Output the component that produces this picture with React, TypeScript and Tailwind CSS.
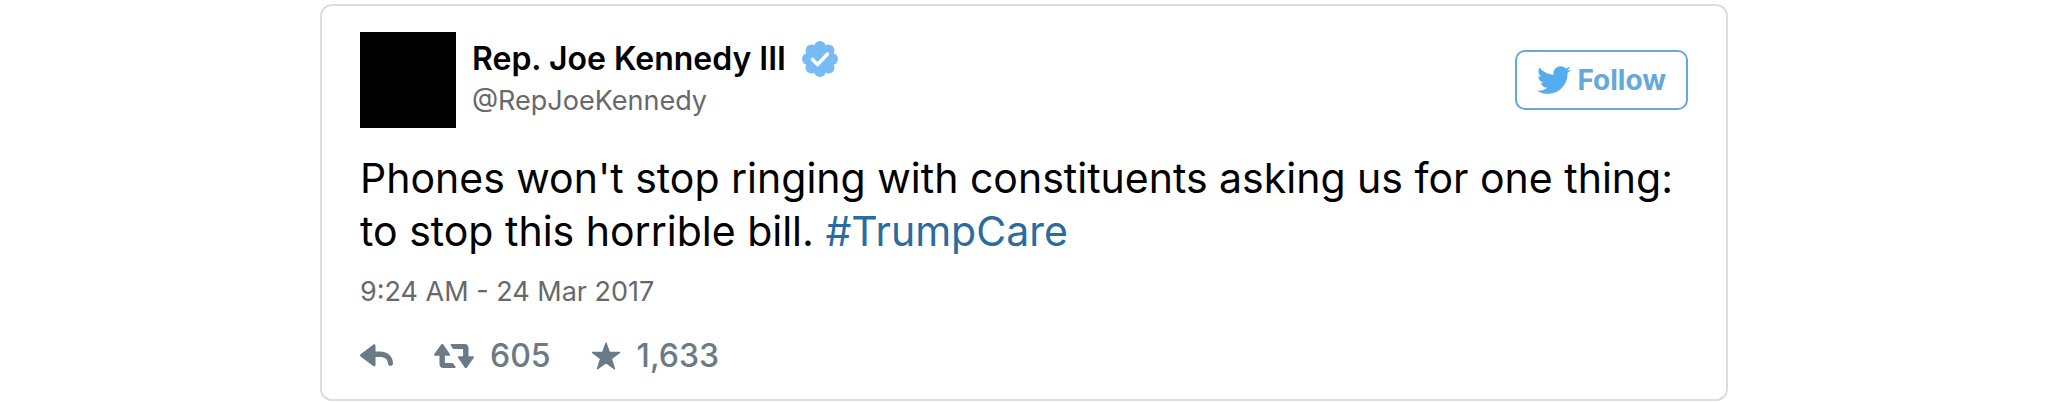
import { FaTwitter } from 'react-icons/fa'

const tweet = {
  name: 'Rep. Joe Kennedy III',
  handle: '@RepJoeKennedy',
  date: '9:24 AM - 24 Mar 2017',
  retweets: '605',
  likes: '1,633',
}

function VerifiedBadge() {
  return (
    <svg viewBox="0 0 36 36" className="size-9" role="img" aria-label="Verified account">
      <g fill="#77bbf4">
        <circle cx="18" cy="18" r="14" />
        <circle cx="18" cy="6" r="6" />
        <circle cx="26.5" cy="9.5" r="6" />
        <circle cx="30" cy="18" r="6" />
        <circle cx="26.5" cy="26.5" r="6" />
        <circle cx="18" cy="30" r="6" />
        <circle cx="9.5" cy="26.5" r="6" />
        <circle cx="6" cy="18" r="6" />
        <circle cx="9.5" cy="9.5" r="6" />
      </g>
      <path d="M10.5 18.5l5 5L25.5 13" fill="none" stroke="#fff" strokeWidth="3.6" strokeLinecap="round" strokeLinejoin="round" />
    </svg>
  )
}

function ReplyIcon() {
  return (
    <svg viewBox="0 0 34 24" className="h-6 w-[34px]" fill="currentColor" aria-hidden="true">
      <path d="M.6 10.200 13.200.8c1.200-.9 2.300-.3 2.300 1.100V7.500h4.500C28 7.500 33 12.500 33 19.500c0 3.300-4.800 3.300-5 0-.3-4-2.800-6.500-8-6.500h-4.500v7.800c0 1.400-1.100 2-2.300 1.100L.6 12.400c-.8-.6-.8-1.600 0-2.200z" />
    </svg>
  )
}

function RetweetIcon() {
  return (
    <svg viewBox="0 0 40 24" className="h-6 w-10" fill="currentColor" aria-hidden="true">
      <path d="M7.100.6c.7-.9 1.500-.9 2.200 0l6.500 9.300c.7 1 .3 1.900-.9 1.900h-4V18c0 .6.3 1 1 1H18c.5 0 .9.200 1.200.6l2.200 3c.5.700.2 1.400-.7 1.400H9.500C7 24 5.500 22.600 5.500 20v-8.200H1.300c-1.200 0-1.600-.9-.9-1.900z" />
      <path d="M32.900 23.400c-.7.900-1.500.9-2.200 0l-6.500-9.300c-.7-1-.3-1.900.9-1.900h4V6c0-.6-.3-1-1-1H20c-.5 0-.9-.2-1.200-.6l-2-3c-.5-.7-.2-1.400.7-1.400h13c2.500 0 4 1.400 4 4v8.200h4.200c1.200 0 1.600.9.9 1.900z" />
    </svg>
  )
}

function StarIcon() {
  return (
    <svg viewBox="0 0 30 28" className="h-7 w-[30px]" fill="currentColor" stroke="currentColor" strokeWidth="1.500" strokeLinejoin="round" aria-hidden="true">
      <path d="M15 1.200l3.300 9.300h10.200l-8.200 6.200 3.100 10L15 20.700l-8.400 6 3.100-10-8.200-6.200h10.200z" />
    </svg>
  )
}

export default function App() {
  return (
    <div className="bg-white pt-1 font-['Inter',sans-serif]">
      <article className="mx-auto max-w-[1408px] rounded-xl border-2 border-[#dddddd] px-[38px] pt-[26px] pb-[23px] text-black">
        {/* Author */}
        <header className="flex h-24 items-center">
          <div className="size-24 bg-black" />
          <div className="ml-4 flex-1">
            <div className="flex h-[42px] items-center gap-4">
              <h1 className="text-[32px] leading-[42px] font-semibold">{tweet.name}</h1>
              <VerifiedBadge />
            </div>
            <a href="#" className="block text-[27px] leading-[42px] text-[#66696c]">{tweet.handle}</a>
          </div>
          <button type="button" className="flex h-[60px] items-center gap-1.5 rounded-[10px] border-2 border-[#64a9dc] px-5 text-[28px] font-bold text-[#64a9dc]">
            <FaTwitter className="size-[34px] text-[#55acee]" aria-hidden="true" />
            Follow
          </button>
        </header>

        <p className="mt-6 text-[41px] leading-[53px]">
          Phones won't stop ringing with constituents asking us for one thing: to stop this horrible bill.{' '}
          <a href="#" className="text-[#2b6c9f]">#TrumpCare</a>
        </p>

        <time dateTime="2017-03-24T09:24" className="mt-3.5 block text-[27px] leading-10 text-[#66696c]">{tweet.date}</time>

        {/* Actions */}
        <footer className="mt-6 flex items-center text-[32px] leading-10 font-medium text-[#6a7a86]">
          <button type="button" aria-label="Reply">
            <ReplyIcon />
          </button>
          <button type="button" aria-label="Retweet" className="ml-10 flex items-center gap-4">
            <RetweetIcon />
            {tweet.retweets}
          </button>
          <button type="button" aria-label="Like" className="ml-10 flex items-center gap-4">
            <StarIcon />
            {tweet.likes}
          </button>
        </footer>
      </article>
    </div>
  )
}
